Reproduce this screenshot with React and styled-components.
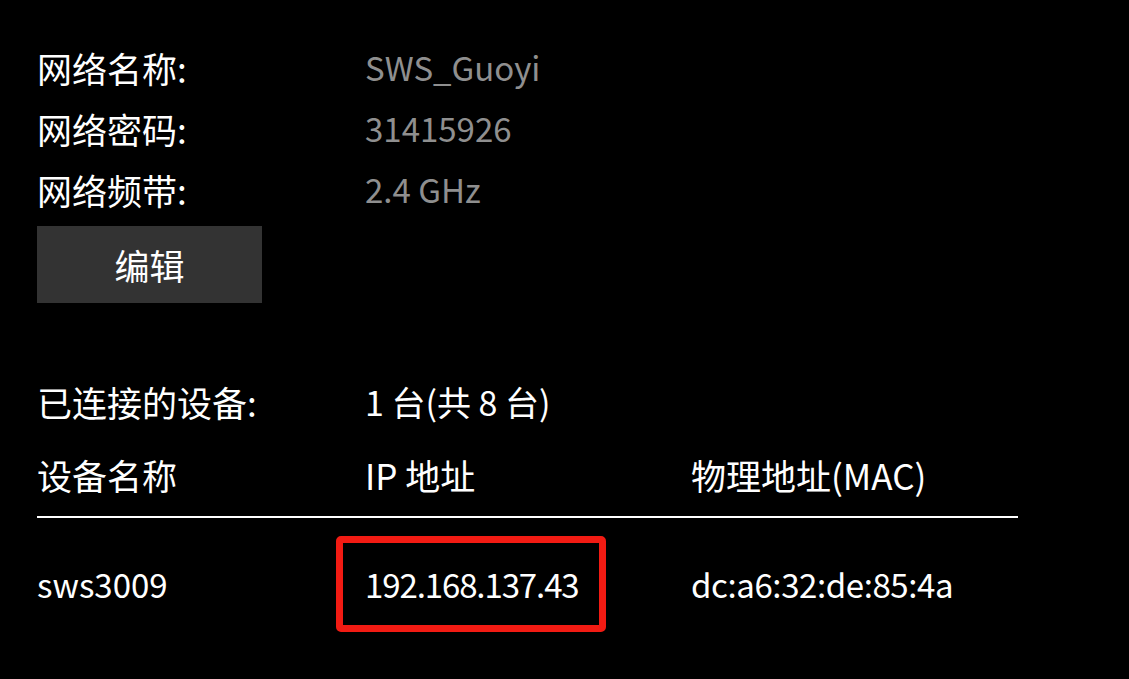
import React from "react";
import styled, { createGlobalStyle } from "styled-components";

const GlobalStyle = createGlobalStyle`
  html, body {
    margin: 0;
    padding: 0;
    background: #000;
  }
  body {
    font-family: "Noto Sans CJK SC", "Noto Sans", sans-serif;
    color: #fff;
    width: 1129px;
    height: 679px;
    overflow: hidden;
  }
`;

const Page = styled.div`
  padding: 37px 0 0 37px;
  width: 981px;
  font-size: 33px;
`;

const InfoGrid = styled.div`
  display: grid;
  grid-template-columns: 328px auto;
  grid-auto-rows: 61px;
  align-items: center;
`;

const Label = styled.div`
  color: #fff;
  font-size: 35px;
  line-height: 61px;
  white-space: nowrap;
`;

const Value = styled.div`
  color: ${(p) => (p.$muted ? "#8f8f8f" : "#fff")};
  font-size: ${(p) => (p.$muted ? "33px" : "34px")};
  line-height: 61px;
  white-space: nowrap;
`;

const EditButton = styled.button`
  display: block;
  width: 225px;
  height: 77px;
  margin-top: 6px;
  padding: 0;
  border: none;
  background: #333;
  color: #fff;
  font-family: inherit;
  font-size: 35px;
  cursor: pointer;
`;

const ConnectedRow = styled(InfoGrid)`
  margin-top: 68px;
`;

const Table = styled.div`
  margin-top: 12px;
`;

const TableRow = styled.div`
  display: grid;
  grid-template-columns: 328px 326px 1fr;
  align-items: center;
  ${(p) =>
    p.$header
      ? `
    height: 61px;
    padding-bottom: 11px;
    border-bottom: 2px solid #fff;
    font-size: 35px;
  `
      : `
    height: 96px;
    margin-top: 18px;
    font-size: 33px;
  `}
`;

const Cell = styled.div`
  line-height: 61px;
  white-space: nowrap;
  letter-spacing: ${(p) => p.$tracking || "normal"};
`;

const Highlight = styled.span`
  position: relative;
  display: inline-block;
  letter-spacing: -1.1px;

  &::before {
    content: "";
    position: absolute;
    top: -18px;
    bottom: -17px;
    left: -29px;
    right: -27px;
    border: 7px solid #f21b13;
    border-radius: 5px;
    pointer-events: none;
  }
`;

export default function App() {
  return (
    <>
      <GlobalStyle />
      <Page>
        <InfoGrid>
          <Label>网络名称:</Label>
          <Value $muted>SWS_Guoyi</Value>
          <Label>网络密码:</Label>
          <Value $muted>31415926</Value>
          <Label>网络频带:</Label>
          <Value $muted>2.4 GHz</Value>
        </InfoGrid>
        <EditButton>编辑</EditButton>
        <ConnectedRow>
          <Label>已连接的设备:</Label>
          <Value>1 台(共 8 台)</Value>
        </ConnectedRow>
        <Table>
          <TableRow $header>
            <Cell>设备名称</Cell>
            <Cell>IP 地址</Cell>
            <Cell>物理地址(MAC)</Cell>
          </TableRow>
          <TableRow>
            <Cell>sws3009</Cell>
            <Cell>
              <Highlight>192.168.137.43</Highlight>
            </Cell>
            <Cell $tracking="-0.4px">dc:a6:32:de:85:4a</Cell>
          </TableRow>
        </Table>
      </Page>
    </>
  );
}
